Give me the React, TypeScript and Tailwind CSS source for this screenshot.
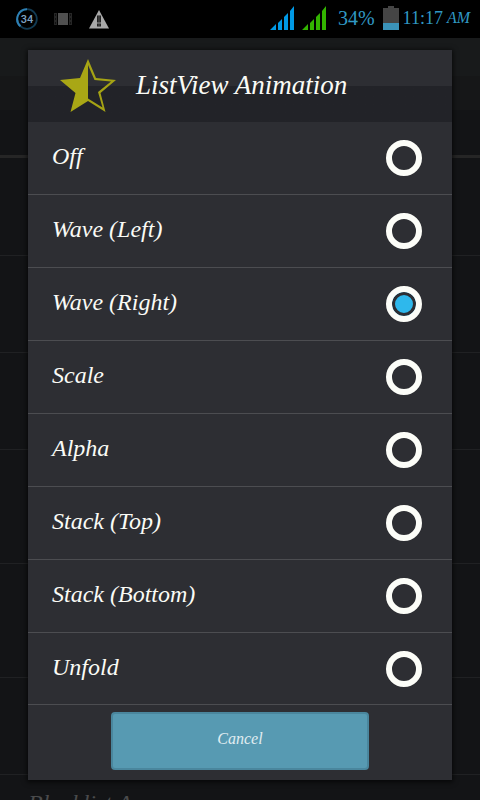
import { useState } from "react";

const options = [
  "Off",
  "Wave (Left)",
  "Wave (Right)",
  "Scale",
  "Alpha",
  "Stack (Top)",
  "Stack (Bottom)",
  "Unfold",
];

function Signal({ className }: { className: string }) {
  return (
    <svg className={className} width="24" height="24" viewBox="0 0 24 24" fill="currentColor" aria-hidden="true">
      <path d="M0 24 6 18V24ZM8 17 12 13V24H8ZM14 11 18 7V24H14ZM20 5 24 0V24H20Z" />
    </svg>
  );
}

function StatusBar() {
  return (
    <header className="flex h-[38px] shrink-0 items-center justify-between bg-black pr-2.5 pl-4 text-[#3098c4]">
      <div className="flex items-center">
        <div className="relative flex size-[22px] items-center justify-center">
          <svg className="absolute inset-0" width="22" height="22" viewBox="0 0 22 22" fill="none" aria-hidden="true">
            <circle cx="11" cy="11" r="9.8" stroke="#123a52" strokeWidth="1.8" />
            <path d="M4.5 18.3A9.8 9.8 0 0 1 11 1.2" stroke="#2e80b4" strokeWidth="2" />
          </svg>
          <span className="font-[Roboto,sans-serif] text-[11px] leading-none font-medium text-[#7fa3c4]">34</span>
        </div>
        <svg className="ml-4" width="18" height="12" viewBox="0 0 18 12" aria-hidden="true">
          <path d="M0 0H3V12H0ZM15 0H18V12H15Z" fill="#262626" />
          <path d="M1 1h1v2H1ZM1 5h1v2H1ZM1 9h1v2H1ZM16 1h1v2h-1ZM16 5h1v2h-1ZM16 9h1v2h-1Z" fill="#111" />
          <path d="M4 0H14V12H4Z" fill="#505050" />
        </svg>
        <svg className="ml-4" width="22" height="19" viewBox="0 0 22 19" aria-hidden="true">
          <path d="M11 0 21 18.5H1Z" fill="#a9a9a9" />
          <path d="M9 5.5h4v7H9ZM9 13.500h4v3H9Z" fill="#222" />
          <path d="M10.5 6h1v6h-1ZM10.5 14h1v2h-1Z" fill="#a9a9a9" opacity=".35" />
        </svg>
      </div>
      <div className="flex items-center pb-0.5">
        <Signal className="text-[#0099e5]" />
        <Signal className="ml-2 text-[#33b400]" />
        <span className="ml-3 text-xl leading-6">34%</span>
        <svg className="ml-2" width="16" height="24" viewBox="0 0 16 24" aria-hidden="true">
          <path d="M5 0H11V2H16V17H0V2H5Z" fill="#454545" />
          <path d="M0 17H16V24H0Z" fill="#3b93b9" />
        </svg>
        <span className="ml-1 text-lg leading-6">11:17</span>
        <span className="ml-1 text-base leading-6 italic">AM</span>
      </div>
    </header>
  );
}

function Backdrop() {
  return (
    <div className="flex min-h-0 flex-1 flex-col overflow-hidden bg-[#131416]">
      <div className="h-[38px] shrink-0 bg-[#181a1b]" />
      <div className="h-[34px] shrink-0 bg-[#161718]" />
      <div className="h-12 shrink-0 border-b-3 border-[#262626]" />
      <div className="h-[98px] shrink-0 border-b border-[#202123]" />
      <div className="h-[97px] shrink-0 border-b border-[#202123]" />
      <div className="h-[97px] shrink-0 border-b border-[#202123]" />
      <div className="h-[114px] shrink-0 border-b border-[#202123]" />
      <div className="h-[114px] shrink-0 border-b border-[#202123]" />
      <div className="h-[97px] shrink-0 border-b border-[#202123]" />
      <div className="px-7 pt-3 text-2xl leading-8 text-[#4a4b4c] italic">Blacklist A</div>
    </div>
  );
}

function Star() {
  return (
    <svg width="58" height="54" viewBox="0 0 58 54" aria-hidden="true">
      <path
        d="M28 0V42L10.500 53 15.500 34 0 21 20 19Z"
        fill="#a9a715"
      />
      <path
        fillRule="evenodd"
        d="M28 0 36 19 56 21 40.500 34 45.500 53 28 42V39.500L42.500 48.500 38 33 51 22.500 34.500 21 28 6Z"
        fill="#a5a314"
      />
    </svg>
  );
}

export default function App() {
  const [selected, setSelected] = useState("Wave (Right)");
  return (
    <div className="relative flex h-screen flex-col overflow-hidden bg-[#131416] font-['Liberation_Serif',serif]">
      <StatusBar />
      <Backdrop />
      <div className="absolute inset-x-0 top-[38px] bottom-0 px-7 pt-3">
        <div
          role="dialog"
          aria-modal="true"
          aria-labelledby="dialog-title"
          className="bg-[#2d2e33] text-[#fafbf6] shadow-[0_1px_5px_1px_rgba(0,0,0,0.7)]"
        >
          <div className="flex h-[72px] items-center gap-[18px] bg-linear-to-b from-[#2d2e33] from-50% to-[#222328] to-50% pl-8">
            <Star />
            <h1 id="dialog-title" className="pb-0.5 text-[27px] leading-9 italic">
              ListView Animation
            </h1>
          </div>
          <div role="radiogroup" aria-labelledby="dialog-title">
            {options.map((name) => (
              <label
                key={name}
                className="flex h-[73px] items-center justify-between border-b border-[#4c4d51] pr-[30px] pl-6 text-2xl leading-8 italic last:h-[72px]"
              >
                <span className="pb-1">{name}</span>
                <input
                  type="radio"
                  name="animation"
                  checked={selected === name}
                  onChange={() => setSelected(name)}
                  className="size-9 appearance-none rounded-full border-6 border-[#fcfdf8] checked:bg-[#2eb8ec] checked:shadow-[inset_0_0_0_3px_#2d2e33]"
                />
              </label>
            ))}
          </div>
          <div className="flex justify-center px-[83px] pt-[7px] pb-[10px]">
            <button
              type="button"
              className="h-[58px] w-full rounded-sm border-2 border-[#4a869d] bg-[#579ab2] pb-1 text-base text-[#e0edf1] italic"
            >
              Cancel
            </button>
          </div>
        </div>
      </div>
    </div>
  );
}
